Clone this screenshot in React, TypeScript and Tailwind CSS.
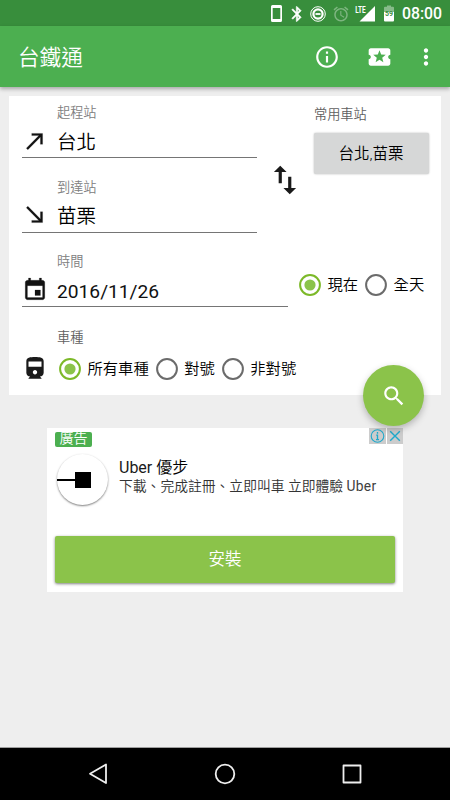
import React, { useState } from "react";

//Material icon paths (24x24 grid)
const icons = {
    departure: "M9 5v2h6.59L4 18.59 5.41 20 17 8.41V15h2V5z",
    arrival: "M19 9h-2v6.59L5.41 4 4 5.41 15.59 17H9v2h10z",
    date: "M17 12h-5v5h5v-5zM16 1v2H8V1H6v2H5c-1.11 0-1.99.9-1.99 2L3 19c0 1.1.89 2 2 2h14c1.1 0 2-.9 2-2V5c0-1.1-.9-2-2-2h-1V1h-2zm3 18H5V8h14v11z",
    train: "M4 15.5C4 17.43 5.57 19 7.5 19L6 20.5v.5h12v-.5L16.5 19c1.93 0 3.5-1.57 3.5-3.5V5c0-3.5-3.58-4-8-4s-8 .5-8 4v10.5zm8 1.5c-1.1 0-2-.9-2-2s.9-2 2-2 2 .9 2 2-.9 2-2 2zm6-7H6V5h12v5z",
    swap: "M16 17.01V10h-2v7.01h-3L15 21l4-3.99h-3zM9 3L5 6.99h3V14h2V6.99h3L9 3z",
    info: "M11 17h2v-6h-2v6zm1-15C6.48 2 2 6.48 2 12s4.48 10 10 10 10-4.48 10-10S17.52 2 12 2zm0 18c-4.41 0-8-3.59-8-8s3.59-8 8-8 8 3.59 8 8-3.59 8-8 8zM11 9h2V7h-2v2z",
    ticket: "M20 12c0-1.1.9-2 2-2V6c0-1.1-.9-2-2-2H4c-1.1 0-1.99.9-1.99 2v4c1.1 0 1.99.9 1.99 2s-.89 2-2 2v4c0 1.1.9 2 2 2h16c1.1 0 2-.9 2-2v-4c-1.1 0-2-.9-2-2zm-4.42 4.8L12 14.5l-3.58 2.3 1.08-4.12-3.29-2.69 4.24-.25L12 5.8l1.54 3.95 4.24.25-3.29 2.69 1.09 4.11z",
    more: "M12 8c1.1 0 2-.9 2-2s-.9-2-2-2-2 .9-2 2 .9 2 2 2zm0 2c-1.1 0-2 .9-2 2s.9 2 2 2 2-.9 2-2-.9-2-2-2zm0 6c-1.1 0-2 .9-2 2s.9 2 2 2 2-.9 2-2-.9-2-2-2z",
    search: "M15.5 14h-.79l-.28-.27C15.41 12.59 16 11.11 16 9.5 16 5.91 13.09 3 9.5 3S3 5.91 3 9.5 5.91 16 9.5 16c1.61 0 3.09-.59 4.23-1.57l.27.28v.79l5 4.99L20.49 19l-4.99-5zm-6 0C7.01 14 5 11.99 5 9.5S7.01 5 9.5 5 14 7.01 14 9.5 11.99 14 9.5 14z",
    bluetooth: "M17.71 7.71L12 2h-1v7.59L6.41 5 5 6.41 10.59 12 5 17.59 6.41 19 11 14.41V22h1l5.71-5.71-4.3-4.29 4.3-4.29zM13 5.83l1.88 1.88L13 9.59V5.83zm1.88 10.46L13 18.17v-3.76l1.88 1.88z",
    alarm: "M22 5.72l-4.6-3.86-1.29 1.53 4.6 3.86L22 5.72zM7.88 3.39L6.6 1.86 2 5.71l1.29 1.53 4.59-3.85zM12.5 8H11v6l4.75 2.85.75-1.23-4-2.37V8zM12 4c-4.97 0-9 4.03-9 9s4.02 9 9 9c4.97 0 9-4.03 9-9s-4.03-9-9-9zm0 16c-3.87 0-7-3.13-7-7s3.13-7 7-7 7 3.13 7 7-3.13 7-7 7z",
};

const Icon = ({ name, className }: { name: keyof typeof icons; className: string }) => (
    <svg viewBox="0 0 24 24" fill="currentColor" className={`shrink-0 ${className}`}>
        <path d={icons[name]} />
    </svg>
);

const StatusBar = () => (
    <div className="h-[26px] bg-[#388e3c] text-white flex items-center justify-end pr-[9px] pt-px">
        <svg viewBox="0 0 11 17" className="w-[11px] h-[17px]">
            <path fill="white" fillRule="evenodd" d="M1.5 0h8Q11 0 11 1.5v14Q11 17 9.5 17h-8Q0 17 0 15.5v-14Q0 0 1.5 0zM1.7 3v11h7.6V3z" />
        </svg>
        <Icon name="bluetooth" className="w-[18px] h-[18px] ml-[6px] stroke-white stroke-[0.6]" />
        <svg viewBox="0 0 16 16" fill="none" stroke="white" className="w-[16px] h-[16px] ml-[4px]">
            <circle cx="8" cy="8" r="7.3" strokeWidth="1" />
            <circle cx="8" cy="8" r="4.6" strokeWidth="2.2" />
            <path d="M5.5 8h5" strokeWidth="1.8" />
        </svg>
        <Icon name="alarm" className="w-[18px] h-[18px] ml-[6px] text-white/35" />
        <svg viewBox="0 0 22 17" className="w-[22px] h-[17px] ml-[4px]">
            <path fill="white" d="M21 1v15.5H5.5z" />
            <rect width="12.5" height="8.5" fill="#388e3c" />
            <text x="1.2" y="7.5" fill="white" fontSize="9.5" fontWeight="700" fontFamily="Roboto, sans-serif" textLength="10.5" lengthAdjust="spacingAndGlyphs">LTE</text>
        </svg>
        <svg viewBox="0 0 10 17" className="w-[10px] h-[17px] ml-[8px]">
            <path fill="white" d="M0 7h10v8.5q0 1-1 1H1q-1 0-1-1z" />
            <path fill="white" fillOpacity="0.4" d="M0 7V2.7q0-1 1-1h2V.5h4v1.2h2q1 0 1 1V7z" />
            <text x="5" y="11.3" textAnchor="middle" fill="#388e3c" fontSize="7" fontWeight="700" fontFamily="Roboto, sans-serif">59</text>
        </svg>
        <span className="w-[39px] ml-[8px] text-[15.8px] leading-none font-medium whitespace-nowrap">08:00</span>
    </div>
);

const Toolbar = () => (
    <div className="relative h-[61px] bg-[#4caf50] text-white flex items-center pl-[18px] pr-[11px] shadow-[0_2px_4px_rgba(0,0,0,0.3)]">
        <h1 className="flex-1 pt-[2px] text-[21.6px] leading-none font-[350]">台鐵通</h1>
        <Icon name="info" className="w-[26px] h-[26px]" />
        <Icon name="ticket" className="w-[27px] h-[26px] ml-[26px]" />
        <Icon name="more" className="w-[26px] h-[26px] ml-[20px]" />
    </div>
);

type FieldProps = {
    label: string;
    value: string;
    icon: keyof typeof icons;
    valueClass: string;
};

//Label, icon and value with an underline
const Field = ({ label, value, icon, valueClass }: FieldProps) => (
    <div>
        <div className="h-[17px] pl-[35px] pt-px flex items-center text-[13.2px] leading-none font-[350] text-[#808080]">{label}</div>
        <div className="h-[37px] flex items-center border-b border-[#757575]">
            <Icon name={icon} className="w-[26px] h-[26px] mt-[3px] text-[#111111] stroke-[#111111] stroke-[0.2]" />
            <span className={`ml-[9px] leading-none ${valueClass}`}>{value}</span>
        </div>
    </div>
);

type RadioProps = {
    options: string[];
    selected: string;
    onSelect: (option: string) => void;
};

const RadioRow = ({ options, selected, onSelect }: RadioProps) => (
    <div className="flex items-center gap-[7px]">
        {options.map((option) => (
            <button key={option} onClick={() => onSelect(option)} className="flex items-center gap-[6.5px] text-[15.3px] leading-none font-[350] text-black whitespace-nowrap">
                <svg viewBox="0 0 22 22" fill="none" className="w-[22px] h-[22px] shrink-0">
                    <circle cx="11" cy="11" r="9.9" strokeWidth="2" stroke={option === selected ? "#7cb928" : "#6b6b6b"} />
                    {option === selected && <circle cx="11" cy="11" r="5.6" fill="#8bc34a" />}
                </svg>
                <span className="pt-px">{option}</span>
            </button>
        ))}
    </div>
);

const SearchCard = () => {
    const [period, setPeriod] = useState<string>("現在");
    const [trainType, setTrainType] = useState<string>("所有車種");

    return (
        <div className="relative mt-[9px] mx-[9px] h-[299px] bg-white pl-[13px] pt-[8px]">
            {/* Stations */}
            <div className="flex">
                <div className="w-[235px] flex flex-col gap-[20.5px]">
                    <Field label="起程站" value="台北" icon="departure" valueClass="pt-[7px] text-[19.5px] font-[350] text-black" />
                    <Field label="到達站" value="苗栗" icon="arrival" valueClass="pt-[7px] text-[19.5px] font-[350] text-black" />
                </div>
                <button className="ml-[9px] mt-[57px] w-[38px] h-[38px] text-[#1a1a1a]">
                    <Icon name="swap" className="w-[38px] h-[38px]" />
                </button>
                <div className="ml-[10px] pt-[2px]">
                    <div className="h-[17px] flex items-center text-[13.2px] leading-none font-[350] text-[#606060]">常用車站</div>
                    <button className="mt-[10px] w-[115px] h-[41px] pt-[2px] pr-px rounded-[2px] bg-[#d6d7d7] text-[15.5px] leading-none font-[350] text-black shadow-[0_0_2px_rgba(0,0,0,0.3)]">台北,苗栗</button>
                </div>
            </div>
            {/* Date */}
            <div className="mt-[20.5px] flex">
                <div className="w-[266px]">
                    <Field label="時間" value="2016/11/26" icon="date" valueClass="pt-[7px] text-[19.2px]" />
                </div>
                <div className="ml-[11px] pt-[21px]">
                    <RadioRow options={["現在", "全天"]} selected={period} onSelect={setPeriod} />
                </div>
            </div>
            {/* Train type */}
            <div className="mt-[22px]">
                <div className="h-[17px] pl-[35px] pt-px flex items-center text-[13.2px] leading-none font-[350] text-[#606060]">車種</div>
                <div className="mt-[8px] flex items-center">
                    <Icon name="train" className="w-[26px] h-[26px] mt-[2px] text-[#1a1a1a]" />
                    <div className="ml-[11px] mt-[2px]">
                        <RadioRow options={["所有車種", "對號", "非對號"]} selected={trainType} onSelect={setTrainType} />
                    </div>
                </div>
            </div>
            {/* Floating search button */}
            <button className="absolute right-[17px] bottom-[-31px] z-10 w-[61px] h-[61px] rounded-full bg-[#8bc34a] text-white flex items-center justify-center shadow-[0_3px_7px_rgba(0,0,0,0.25)]">
                <Icon name="search" className="w-[26px] h-[26px]" />
            </button>
        </div>
    );
};

const AdCard = () => (
    <div className="relative mt-[33px] ml-[47px] w-[356px] h-[164px] bg-white pt-[4px] px-[8px]">
        <div className="w-[37px] h-[15px] rounded-[2px] bg-[#4caf50] text-white text-[14px] leading-[13px] font-[350] text-center">廣告</div>
        {/* Ad choices */}
        <div className="absolute top-0 right-0 flex gap-px">
            <svg viewBox="0 0 17 16" fill="none" stroke="#1fa9cc" className="w-[17px] h-[16px] bg-[#cccccc]">
                <circle cx="8.5" cy="8" r="6.3" strokeWidth="1.1" />
                <path d="M8.5 4v1.7M7.2 7.2h1.3v4.5M7 11.7h3" strokeWidth="1.3" />
            </svg>
            <svg viewBox="0 0 16 16" fill="none" stroke="#1fa9cc" className="w-[16px] h-[16px] bg-[#cccccc]">
                <path d="M3.2 3.2l9.6 9.6M12.8 3.2l-9.6 9.6" strokeWidth="1.4" />
            </svg>
        </div>
        <div className="flex mt-[7px] pl-[2px]">
            <div className="w-[51px] h-[51px] rounded-full bg-white shadow-[0_1px_2px_rgba(0,0,0,0.5)] flex items-center">
                <div className="w-[18px] h-[2px] bg-black" />
                <div className="w-[16px] h-[16px] bg-black" />
            </div>
            <div className="ml-[11px] pt-[4px] whitespace-nowrap">
                <div className="h-[20px] flex items-center text-[16px] leading-none text-[#1a1a1a]">
                    <span>Uber <span className="font-[350] text-black">優步</span></span>
                </div>
                <div className="h-[18px] flex items-center text-[13.8px] leading-none font-[350] text-[#333333]">
                    <span>下載、完成註冊、立即叫車 立即體驗 <span className="font-normal text-[#404040] tracking-[0.3px]">Uber</span></span>
                </div>
            </div>
        </div>
        <button className="mt-[31px] pt-px w-[340px] h-[47px] rounded-[2px] bg-[#8bc34a] text-white text-[16.5px] leading-none font-[350] shadow-[0_1px_3px_rgba(0,0,0,0.5)]">安裝</button>
    </div>
);

const NavBar = () => (
    <div className="h-[53px] bg-black border-t border-[#9e9e9e] flex items-center justify-between px-[88px]">
        <svg viewBox="0 0 20 22" fill="none" stroke="#eeeeee" strokeWidth="1.8" strokeLinejoin="round" className="w-[20px] h-[22px]">
            <path d="M18 1.5v18.5L2 10.8z" />
        </svg>
        <svg viewBox="0 0 22 22" fill="none" stroke="#eeeeee" strokeWidth="1.8" className="w-[22px] h-[22px]">
            <circle cx="11" cy="11" r="9.3" />
        </svg>
        <svg viewBox="0 0 20 20" fill="none" stroke="#eeeeee" strokeWidth="1.8" strokeLinejoin="round" className="w-[20px] h-[20px]">
            <rect x="1.5" y="1.5" width="17" height="17" />
        </svg>
    </div>
);

const App = () => {
    return (
        <div className="w-[450px] h-[800px] flex flex-col overflow-hidden bg-[#eeeeee] text-[#111111] font-[Roboto,'Noto_Sans_CJK_TC',sans-serif]">
            <StatusBar />
            <Toolbar />
            <div className="flex-1">
                <SearchCard />
                <AdCard />
            </div>
            <NavBar />
        </div>
    );
};

export default App;
